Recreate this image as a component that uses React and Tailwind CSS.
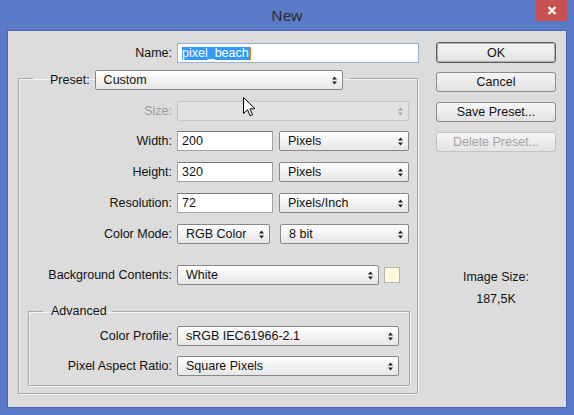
import React from "react";

function Arrows({ color = "#222" }) {
  return (
    <svg width="5" height="9" viewBox="0 0 5 9" className="shrink-0">
      <polygon points="0,3.5 2.5,0.5 5,3.5" fill={color} />
      <polygon points="0,5.5 2.5,8.5 5,5.5" fill={color} />
    </svg>
  );
}

function Select({ w, children, disabled }) {
  return (
    <div
      className={`${w} h-[20px] shrink-0 flex items-center justify-between rounded-[2px] border pl-[8px] pr-[5px] ${
        disabled
          ? "border-[#c4c4c4] bg-[#e2e2e2]"
          : "border-[#878787] bg-linear-to-b from-white to-[#e6e6e6]"
      }`}
    >
      <span className="truncate pt-[1px]">{children}</span>
      <Arrows color={disabled ? "#a8a8a8" : "#222"} />
    </div>
  );
}

function Input({ w, children }) {
  return (
    <div
      className={`${w} h-[20px] shrink-0 flex items-center bg-white border border-[#a3a3a3] border-t-[#7a7a7a] pl-[4px] pt-[1px]`}
    >
      {children}
    </div>
  );
}

function Label({ w, children, dim }) {
  return (
    <div className={`${w} shrink-0 text-right pr-[5px] pt-[1px] ${dim ? "text-[#9b9b9b]" : ""}`}>
      {children}
    </div>
  );
}

function Button({ children, variant }) {
  const cls =
    variant === "default"
      ? "h-[21px] border-[#5e5e5e] shadow-[inset_0_0_0_1px_#b0b0b0] text-[#111]"
      : variant === "disabled"
      ? "h-[20px] border-[#c2c2c2] text-[#a3a3a3]"
      : "h-[20px] border-[#8a8a8a] text-[#111]";
  return (
    <div
      className={`w-[120px] flex items-center justify-center rounded-[3px] border bg-linear-to-b from-[#f5f5f5] to-[#e2e2e2] pt-[1px] ${cls}`}
    >
      {children}
    </div>
  );
}

export default function App() {
  return (
    <div className="relative w-[574px] h-[415px] bg-[#5b7ac7] flex flex-col font-['Liberation_Sans',Arial,sans-serif] text-[12.5px] leading-[15px] text-[#111]">
      {/* title bar */}
      <div className="h-[30px] shrink-0 flex pl-[7px] pr-[7px]">
        <div className="w-[31px]" />
        <div className="flex-1 flex items-center justify-center">
          <span className="font-['Noto_Sans',sans-serif] text-[15px] text-[#2b2b2b]">New</span>
        </div>
        <div className="w-[31px] h-[21px] bg-[#c75050] flex items-center justify-center">
          <svg width="10" height="9" viewBox="0 0 10 9">
            <path d="M1.5 1 L8.5 8 M8.5 1 L1.5 8" stroke="#fff" strokeWidth="2.2" />
          </svg>
        </div>
      </div>

      {/* body */}
      <div className="mx-[7px] h-[378px] shrink-0 bg-[#dcdcdc] border border-[#4a67b3] flex">
        {/* left column */}
        <div className="w-[411px] shrink-0 pt-[12px]">
          <div className="flex items-center h-[20px]">
            <Label w="w-[169px]">Name:</Label>
            <div className="w-[242px] h-[20px] shrink-0 flex items-center bg-white border border-[#93b1d8] pl-[4px]">
              <span className="bg-[#3399ff] text-white leading-[13px] h-[13px] pr-[1px]">pixel_beach</span>
              <span className="w-[1px] h-[13px] bg-[#e58a1f]" />
            </div>
          </div>

          <fieldset className="mt-[3px] ml-[10px] w-[400px] border border-[#a8a8a8] shadow-[inset_1px_1px_0_#f4f4f4,1px_1px_0_#f4f4f4] pl-[9px] pr-[7px] pt-[11px] pb-[7px]">
            <legend className="ml-[5px] pl-[17px] pr-[7px] pt-[4px]">
              <div className="flex items-center">
                <span className="pr-[5px] pt-[1px]">Preset:</span>
                <Select w="w-[248px]">Custom</Select>
              </div>
            </legend>

            <div className="flex items-center h-[20px]">
              <Label w="w-[149px]" dim>Size:</Label>
              <Select w="w-[232px]" disabled></Select>
            </div>
            <div className="flex items-center h-[20px] mt-[10px]">
              <Label w="w-[149px]">Width:</Label>
              <Input w="w-[96px]">200</Input>
              <div className="w-[6px]" />
              <Select w="w-[130px]">Pixels</Select>
            </div>
            <div className="flex items-center h-[20px] mt-[11px]">
              <Label w="w-[149px]">Height:</Label>
              <Input w="w-[96px]">320</Input>
              <div className="w-[6px]" />
              <Select w="w-[130px]">Pixels</Select>
            </div>
            <div className="flex items-center h-[20px] mt-[11px]">
              <Label w="w-[149px]">Resolution:</Label>
              <Input w="w-[96px]">72</Input>
              <div className="w-[6px]" />
              <Select w="w-[130px]">Pixels/Inch</Select>
            </div>
            <div className="flex items-center h-[20px] mt-[11px]">
              <Label w="w-[149px]">Color Mode:</Label>
              <Select w="w-[93px]">RGB Color</Select>
              <div className="w-[10px]" />
              <Select w="w-[129px]">8 bit</Select>
            </div>
            <div className="flex items-center h-[20px] mt-[21px]">
              <Label w="w-[149px]">Background Contents:</Label>
              <Select w="w-[202px]">White</Select>
              <div className="ml-[5px] w-[16px] h-[16px] bg-[#fffbdc] border border-[#b3b3b3]" />
            </div>

            <fieldset className="mt-[19px] border border-[#a8a8a8] shadow-[inset_1px_1px_0_#f4f4f4,1px_1px_0_#f4f4f4] pt-[7px] pb-[9px]">
              <legend className="ml-[14px] pl-[8px] pr-[5px]">Advanced</legend>
              <div className="flex items-center h-[20px]">
                <Label w="w-[148px]">Color Profile:</Label>
                <Select w="w-[222px]">sRGB IEC61966-2.1</Select>
              </div>
              <div className="flex items-center h-[20px] mt-[10px]">
                <Label w="w-[148px]">Pixel Aspect Ratio:</Label>
                <Select w="w-[222px]">Square Pixels</Select>
              </div>
            </fieldset>
          </fieldset>
        </div>

        {/* right column */}
        <div className="ml-[17px] w-[120px] shrink-0 pt-[11px] flex flex-col">
          <Button variant="default">OK</Button>
          <div className="mt-[9px]">
            <Button>Cancel</Button>
          </div>
          <div className="mt-[10px]">
            <Button>Save Preset...</Button>
          </div>
          <div className="mt-[10px]">
            <Button variant="disabled">Delete Preset...</Button>
          </div>
          <div className="mt-[118px] text-center">Image Size:</div>
          <div className="mt-[7px] text-center">187,5K</div>
        </div>
      </div>

      {/* mouse cursor */}
      <svg
        className="absolute left-[243px] top-[97px]"
        width="13"
        height="20"
        viewBox="0 0 13 20"
      >
        <path
          d="M0.5 0.5 L0.5 16.5 L4.5 12.8 L7.2 18.8 L9.6 17.8 L7 11.8 L12 11.8 Z"
          fill="#fff"
          stroke="#000"
          strokeWidth="1"
          strokeLinejoin="miter"
        />
      </svg>
    </div>
  );
}
